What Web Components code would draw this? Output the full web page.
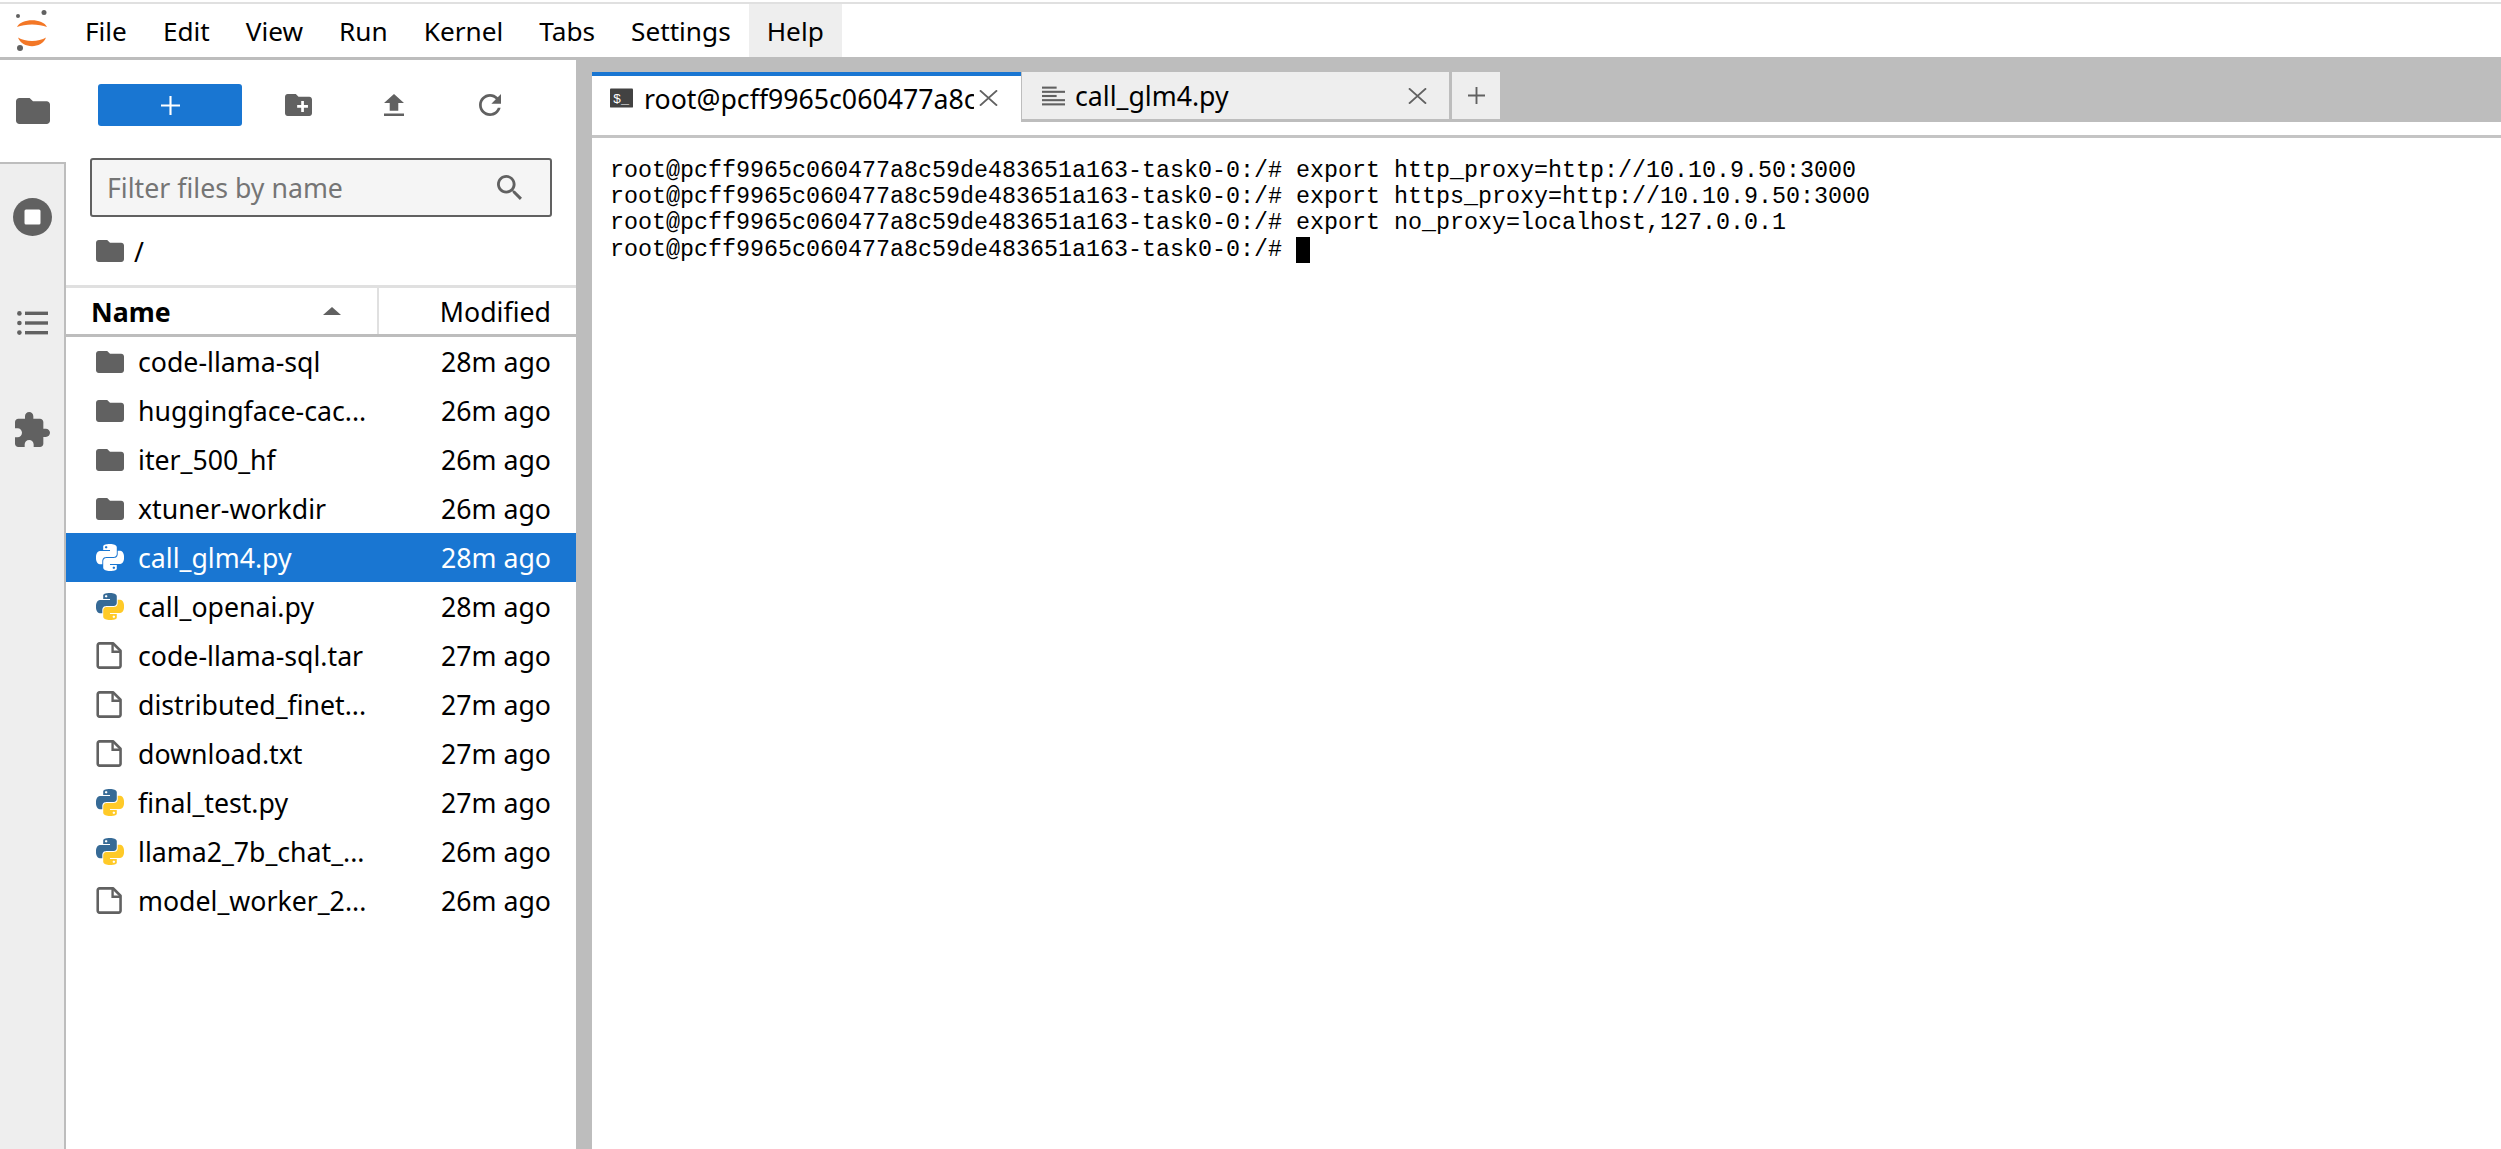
<!DOCTYPE html>
<html lang="en">
<head>
<meta charset="utf-8">
<title>JupyterLab</title>
<style>
  html, body { margin: 0; height: 100%; background: #fff; overflow: hidden; }
</style>
</head>
<body>
<jp-app></jp-app>
<script>
const UI_FONT = '"Noto Sans", "Open Sans", sans-serif';
const UI_SIZE = '26.7px';

const pyPaths = {
  blue: 'M14.25.18l.9.2.73.26.59.3.45.32.34.34.25.34.16.33.1.3.04.26.02.2-.01.13V8.5l-.05.63-.13.55-.21.46-.26.38-.3.31-.33.25-.35.19-.35.14-.33.1-.3.07-.26.04-.21.02H8.77l-.69.05-.59.14-.5.22-.41.27-.33.32-.27.35-.2.36-.15.37-.1.35-.07.32-.04.27-.02.21v3.06H3.17l-.21-.03-.28-.07-.32-.12-.35-.18-.36-.26-.36-.36-.35-.46-.32-.59-.28-.73-.21-.88-.14-1.05-.05-1.23.06-1.22.16-1.04.24-.87.32-.71.36-.57.4-.44.42-.33.42-.24.4-.16.36-.1.32-.05.24-.01h.16l.06.01h8.16v-.83H6.18l-.01-2.75-.02-.37.05-.34.11-.31.17-.28.25-.26.31-.23.38-.2.44-.18.51-.15.58-.12.64-.1.71-.06.77-.04.84-.02 1.27.05zm-6.3 1.98l-.23.33-.08.41.08.41.23.34.33.22.41.09.41-.09.33-.22.23-.34.08-.41-.08-.41-.23-.33-.33-.22-.41-.09-.41.09z',
  yellow: 'M21.04 6.11l.28.06.32.12.35.18.36.27.36.35.35.47.32.59.28.73.21.88.14 1.04.05 1.23-.06 1.23-.16 1.04-.24.86-.32.71-.36.57-.4.45-.42.33-.42.24-.4.16-.36.09-.32.05-.24.02-.16-.01h-8.22v.82h5.84l.01 2.76.02.36-.05.34-.11.31-.17.29-.25.25-.31.24-.38.2-.44.17-.51.15-.58.13-.64.09-.71.07-.77.04-.84.01-1.27-.04-1.07-.14-.9-.2-.73-.25-.59-.3-.45-.33-.34-.34-.25-.34-.16-.33-.1-.3-.04-.25-.02-.2.01-.13v-5.34l.05-.64.13-.54.21-.46.26-.38.3-.32.33-.24.35-.2.35-.14.33-.1.3-.06.26-.04.21-.02.13-.01h5.84l.69-.05.59-.14.5-.21.41-.28.33-.32.27-.35.2-.36.15-.36.1-.35.07-.32.04-.28.02-.21V6.07h2.09l.14.01zm-6.47 14.25l-.23.33-.08.41.08.41.23.33.33.23.41.08.41-.08.33-.23.23-.33.08-.41-.08-.41-.23-.33-.33-.23-.41-.08-.41.08z'
};

// icon markup, size is set by whoever uses it
const icons = {
  folder: '<svg viewBox="2 4 20 16" preserveAspectRatio="none"><path fill="#616161" d="M10 4H4c-1.1 0-1.99.9-1.99 2L2 18c0 1.1.9 2 2 2h16c1.1 0 2-.9 2-2V8c0-1.1-.9-2-2-2h-8l-2-2z"/></svg>',
  newFolder: '<svg viewBox="2 4 20 16" preserveAspectRatio="none"><path fill="#616161" d="M20 6h-8l-2-2H4c-1.11 0-1.99.89-1.99 2L2 18c0 1.11.89 2 2 2h16c1.11 0 2-.89 2-2V8c0-1.11-.89-2-2-2zm-1 8h-3v3h-2v-3h-3v-2h3V9h2v3h3v2z"/></svg>',
  upload: '<svg viewBox="5 3 14 17" preserveAspectRatio="none"><path fill="#616161" d="M9 16h6v-6h4l-7-7-7 7h4zm-4 2h14v2H5z"/></svg>',
  refresh: '<svg viewBox="4 4 16 16" preserveAspectRatio="none"><path fill="#616161" d="M17.65 6.35C16.2 4.9 14.21 4 12 4c-4.42 0-7.99 3.58-7.99 8s3.57 8 7.99 8c3.73 0 6.84-2.55 7.73-6h-2.08c-.82 2.33-3.04 4-5.65 4-3.31 0-6-2.69-6-6s2.69-6 6-6c1.66 0 3.14.69 4.22 1.78L13 11h7V4l-2.35 2.35z"/></svg>',
  search: '<svg viewBox="3 3 17.5 17.5" preserveAspectRatio="none"><path fill="#616161" d="M15.5 14h-.79l-.28-.27C15.41 12.59 16 11.11 16 9.5 16 5.91 13.09 3 9.5 3S3 5.91 3 9.5 5.91 16 9.5 16c1.61 0 3.09-.59 4.23-1.57l.27.28v.79l5 4.99L20.49 19l-4.99-5zm-6 0C7.01 14 5 11.99 5 9.5S7.01 5 9.5 5 14 7.01 14 9.5 11.99 14 9.5 14z"/></svg>',
  file: '<svg viewBox="0 0 26 24" preserveAspectRatio="none"><path fill="none" stroke="#616161" stroke-width="2.4" stroke-linejoin="round" d="M3.2 1.2h12.6l7 6.6v13.4a1.6 1.6 0 0 1-1.6 1.6H3.2a1.6 1.6 0 0 1-1.6-1.6V2.8a1.6 1.6 0 0 1 1.6-1.6z"/><path fill="none" stroke="#616161" stroke-width="2.2" d="M15.4 1.6v7h7"/></svg>',
  python: `<svg viewBox="0 0 24 24" preserveAspectRatio="none"><path fill-rule="evenodd" fill="#366a96" d="${pyPaths.blue}"/><path fill-rule="evenodd" fill="#ffca28" d="${pyPaths.yellow}"/></svg>`,
  pythonWhite: `<svg viewBox="0 0 24 24" preserveAspectRatio="none"><path fill-rule="evenodd" fill="#fff" d="${pyPaths.blue}"/><path fill-rule="evenodd" fill="#fff" d="${pyPaths.yellow}"/></svg>`,
  stop: '<svg viewBox="0 0 39 38"><ellipse cx="19.5" cy="19" rx="19.5" ry="19" fill="#616161"/><rect x="11.5" y="11.5" width="16" height="15" rx="1.5" fill="#fff"/></svg>',
  list: '<svg viewBox="0 0 31 24"><g fill="#616161"><circle cx="2.4" cy="2.4" r="2.3"/><circle cx="2.4" cy="12" r="2.3"/><circle cx="2.4" cy="21.6" r="2.3"/><rect x="8" y="0.6" width="23" height="3.4"/><rect x="8" y="10.3" width="23" height="3.4"/><rect x="8" y="20" width="23" height="3.4"/></g></svg>',
  extension: '<svg viewBox="2 1 21 21" preserveAspectRatio="none"><path fill="#616161" d="M20.5 11H19V7c0-1.1-.9-2-2-2h-4V3.5C13 2.12 11.88 1 10.5 1S8 2.12 8 3.5V5H4c-1.1 0-1.99.9-1.99 2v3.8H3.5c1.49 0 2.7 1.21 2.7 2.7s-1.21 2.7-2.7 2.7H2V20c0 1.1.9 2 2 2h3.8v-1.5c0-1.49 1.21-2.7 2.7-2.7 1.49 0 2.7 1.21 2.7 2.7V22H17c1.1 0 2-.9 2-2v-4h1.5c1.38 0 2.5-1.12 2.5-2.5S21.88 11 20.5 11z"/></svg>',
  terminal: '<svg viewBox="0 0 24 20"><rect width="24" height="20" rx="1" fill="#424242"/><text x="3" y="15" font-family="Liberation Mono, monospace" font-size="14" fill="#fff">$_</text></svg>',
  textFile: '<svg viewBox="0 0 22 18"><g fill="#616161"><rect y="0" width="14" height="2"/><rect y="4" width="22" height="2"/><rect y="8" width="14" height="2"/><rect y="12" width="22" height="2"/><rect y="16" width="22" height="2"/></g></svg>',
  close: '<svg viewBox="0 0 20 16"><path fill="none" stroke="#616161" stroke-width="2" d="M1 0l18 16M19 0L1 16"/></svg>',
  plus: '<svg viewBox="0 0 18 18"><path fill="none" stroke="currentColor" stroke-width="2" d="M9 0v18M0 9h18"/></svg>',
  logo: '<svg width="64" height="54" viewBox="0 0 64 54"><g fill="#f37726"><path d="M17 23C21 14 43 14 47 23 39 19.500 25 19.500 17 23z"/><path d="M18 33.500C25 38 39 38 46 33.500 42 45 22 45 18 33.500z"/></g><g fill="#616161"><circle cx="18" cy="12" r="2"/><circle cx="44" cy="8.500" r="2.500"/><circle cx="20" cy="44" r="3"/></g></svg>'
};

class JpMenubar extends HTMLElement {
  connectedCallback() {
    if (this.shadowRoot) return;
    const items = ['File', 'Edit', 'View', 'Run', 'Kernel', 'Tabs', 'Settings', 'Help'];
    const shadow = this.attachShadow({ mode: 'open' });
    shadow.innerHTML = `
      <style>
        :host {
          display: flex;
          flex: none;
          box-sizing: border-box;
          height: 58px;
          margin-top: 2px;
          border-top: 2px solid #e0e0e0;
          border-bottom: 3px solid #bdbdbd;
          font: 26.2px ${UI_FONT};
          color: #000;
          background: #fff;
        }
        .logo { width: 67px; flex: none; }
        .logo svg { display: block; }
        .item { padding: 0 18px; line-height: 55px; }
        .item.hover { background: #eee; }
      </style>
      <div class="logo">${icons.logo}</div>
      ${items.map(t => `<div class="item${t === 'Help' ? ' hover' : ''}">${t}</div>`).join('')}
    `;
  }
}

class JpSidebar extends HTMLElement {
  connectedCallback() {
    if (this.shadowRoot) return;
    const shadow = this.attachShadow({ mode: 'open' });
    shadow.innerHTML = `
      <style>
        :host {
          display: flex;
          flex-direction: column;
          flex: none;
          width: 66px;
          background: #eee;
          box-sizing: border-box;
        }
        .tab {
          height: 106px;
          display: flex;
          align-items: center;
          justify-content: center;
          border-right: 2px solid #bdbdbd;
          box-sizing: border-box;
        }
        .tab.active {
          height: 104px;
          background: #fff;
          border-right: 0;
          border-bottom: 2px solid #bdbdbd;
        }
        .fill { flex: 1; border-right: 2px solid #bdbdbd; }
        .tab svg { display: block; }
        .folder svg { width: 34px; height: 26px; }
        .stop svg { width: 39px; height: 38px; }
        .list svg { width: 31px; height: 24px; }
        .ext svg { width: 35px; height: 35px; }
      </style>
      <div class="tab active folder">${icons.folder}</div>
      <div class="tab stop">${icons.stop}</div>
      <div class="tab list">${icons.list}</div>
      <div class="tab ext">${icons.extension}</div>
      <div class="fill"></div>
    `;
  }
}

class JpFileRow extends HTMLElement {
  connectedCallback() {
    if (this.shadowRoot) return;
    const kind = this.getAttribute('kind');
    const selected = this.hasAttribute('selected');
    const icon = kind === 'python' && selected ? icons.pythonWhite : icons[kind];
    const shadow = this.attachShadow({ mode: 'open' });
    shadow.innerHTML = `
      <style>
        :host {
          display: flex;
          align-items: center;
          height: 49px;
          padding: 0 25px 0 30px;
          font: ${UI_SIZE} ${UI_FONT};
          color: ${selected ? '#fff' : '#000'};
          background: ${selected ? '#1976d2' : '#fff'};
        }
        .icon { width: 28px; height: ${kind === 'folder' ? 22 : 27}px; flex: none; margin-right: 14px; }
        .icon svg { display: block; width: 100%; height: 100%; }
        .name { flex: 1; white-space: nowrap; }
        .date { white-space: nowrap; }
      </style>
      <span class="icon">${icon}</span>
      <span class="name"><slot></slot></span>
      <span class="date">${this.getAttribute('date')}</span>
    `;
  }
}

class JpFileBrowser extends HTMLElement {
  connectedCallback() {
    if (this.shadowRoot) return;
    const shadow = this.attachShadow({ mode: 'open' });
    shadow.innerHTML = `
      <style>
        :host {
          display: flex;
          flex-direction: column;
          flex: none;
          width: 510px;
          background: #fff;
          font: ${UI_SIZE} ${UI_FONT};
          color: #000;
          overflow: hidden;
        }
        svg { display: block; width: 100%; height: 100%; }
        .toolbar { display: flex; align-items: center; padding: 24px 0 0 32px; height: 42px; }
        .new {
          width: 144px;
          height: 42px;
          margin-right: 8px;
          background: #1976d2;
          color: #fff;
          border-radius: 3px;
          display: flex;
          align-items: center;
          justify-content: center;
        }
        .new svg { width: 19px; height: 19px; }
        .tool { width: 96px; display: flex; justify-content: center; }
        .tool span { display: block; height: 22px; }
        .filter {
          box-sizing: border-box;
          display: flex;
          align-items: center;
          justify-content: space-between;
          width: 462px;
          height: 59px;
          margin: 32px 0 0 24px;
          padding: 0 28px 0 15px;
          background: #f5f5f5;
          border: 2px solid #616161;
          border-radius: 3px;
          color: #757575;
        }
        .filter span { display: block; width: 25px; height: 25px; }
        .crumbs { display: flex; align-items: center; height: 68px; padding: 0 0 0 30px; box-sizing: border-box; }
        .crumbs .ic { width: 28px; height: 22px; margin-right: 10px; }
        .header {
          box-sizing: border-box;
          display: flex;
          align-items: center;
          height: 52px;
          border-top: 3px solid #e0e0e0;
          border-bottom: 3px solid #bdbdbd;
          padding: 0 25px;
        }
        .name {
          box-sizing: border-box;
          flex: none;
          width: 286px;
          padding-right: 36px;
          display: flex;
          align-items: center;
          justify-content: space-between;
          font-weight: 700;
        }
        .sort { flex: none; width: 18px; height: 8px; }
        .divider { align-self: stretch; width: 2px; background: #e0e0e0; }
        .modified { margin-left: auto; }
      </style>
      <div class="toolbar">
        <div class="new">${icons.plus}</div>
        <div class="tool"><span style="width:27px">${icons.newFolder}</span></div>
        <div class="tool"><span style="width:20px">${icons.upload}</span></div>
        <div class="tool"><span style="width:22px">${icons.refresh}</span></div>
      </div>
      <div class="filter">Filter files by name<span>${icons.search}</span></div>
      <div class="crumbs"><div class="ic">${icons.folder}</div>/</div>
      <div class="header">
        <div class="name">Name<svg class="sort" viewBox="0 0 18 8" preserveAspectRatio="none"><path fill="#616161" d="M9 0l9 8H0z"/></svg></div>
        <div class="divider"></div>
        <div class="modified">Modified</div>
      </div>
      <slot></slot>
    `;
  }
}

class JpTab extends HTMLElement {
  connectedCallback() {
    if (this.shadowRoot) return;
    const active = this.hasAttribute('active');
    const shadow = this.attachShadow({ mode: 'open' });
    shadow.innerHTML = `
      <style>
        :host {
          display: flex;
          align-items: center;
          box-sizing: border-box;
          width: 429px;
          height: ${active ? 63 : 50}px;
          padding: ${active ? '0 23px 15px 18px' : '0 22px 0 20px'};
          background: ${active ? '#fff' : '#eee'};
          border-top: ${active ? '4px solid #1976d2' : '0'};
          ${active ? '' : 'border-bottom: 3px solid #bdbdbd; border-left: 1px solid #bdbdbd; border-right: 1px solid #bdbdbd;'}
          font: ${UI_SIZE} ${UI_FONT};
          color: #000;
        }
        .icon { flex: none; width: 23px; height: 20px; margin-right: ${active ? 11 : 10}px; }
        .icon svg, .close svg { display: block; width: 100%; height: 100%; }
        .title { flex: 1; overflow: hidden; white-space: nowrap; }
        .close { flex: none; width: 19px; height: 16px; margin-left: 5px; }
      </style>
      <span class="icon">${icons[this.getAttribute('icon')]}</span>
      <span class="title"><slot></slot></span>
      <span class="close">${icons.close}</span>
    `;
  }
}

class JpTabbar extends HTMLElement {
  connectedCallback() {
    if (this.shadowRoot) return;
    const shadow = this.attachShadow({ mode: 'open' });
    shadow.innerHTML = `
      <style>
        :host {
          display: block;
          flex: none;
          height: 78px;
          box-sizing: border-box;
          background: linear-gradient(#bdbdbd 62px, #fff 62px);
          border-bottom: 3px solid #c4c4c4;
        }
        .strip { display: flex; align-items: flex-start; padding-top: 12px; }
        .add {
          box-sizing: border-box;
          width: 48px;
          height: 50px;
          margin-left: 2px;
          background: #eee;
          border-bottom: 3px solid #bdbdbd;
          color: #616161;
          display: flex;
          align-items: center;
          justify-content: center;
        }
        .add svg { display: block; width: 17px; height: 17px; }
      </style>
      <div class="strip"><slot></slot><div class="add">${icons.plus}</div></div>
    `;
  }
}

class JpTerminal extends HTMLElement {
  connectedCallback() {
    if (this.shadowRoot) return;
    const prompt = 'root@pcff9965c060477a8c59de483651a163-task0-0:/# ';
    const lines = [
      'export http_proxy=http://10.10.9.50:3000',
      'export https_proxy=http://10.10.9.50:3000',
      'export no_proxy=localhost,127.0.0.1'
    ];
    const shadow = this.attachShadow({ mode: 'open' });
    shadow.innerHTML = `
      <style>
        :host {
          display: block;
          flex: 1;
          padding: 20px 0 0 18px;
          background: #fff;
          color: #000;
          font: 23.33px/26.2px "Liberation Mono", monospace;
        }
        .line { white-space: pre; }
        .cursor { display: inline-block; width: 14px; height: 26px; background: #000; vertical-align: top; }
      </style>
      ${lines.map(l => `<div class="line">${prompt}${l}</div>`).join('')}
      <div class="line">${prompt}<span class="cursor"></span></div>
    `;
  }
}

class JpApp extends HTMLElement {
  connectedCallback() {
    if (this.shadowRoot) return;
    const rows = [
      ['folder', 'code-llama-sql', '28m ago'],
      ['folder', 'huggingface-cac...', '26m ago'],
      ['folder', 'iter_500_hf', '26m ago'],
      ['folder', 'xtuner-workdir', '26m ago'],
      ['python', 'call_glm4.py', '28m ago', true],
      ['python', 'call_openai.py', '28m ago'],
      ['file', 'code-llama-sql.tar', '27m ago'],
      ['file', 'distributed_finet...', '27m ago'],
      ['file', 'download.txt', '27m ago'],
      ['python', 'final_test.py', '27m ago'],
      ['python', 'llama2_7b_chat_...', '26m ago'],
      ['file', 'model_worker_2...', '26m ago']
    ];
    const shadow = this.attachShadow({ mode: 'open' });
    shadow.innerHTML = `
      <style>
        :host { display: flex; flex-direction: column; height: 100vh; }
        .body { flex: 1; display: flex; min-height: 0; }
        .splitter { flex: none; width: 16px; background: #bdbdbd; }
        .main { flex: 1; display: flex; flex-direction: column; min-width: 0; }
      </style>
      <jp-menubar></jp-menubar>
      <div class="body">
        <jp-sidebar></jp-sidebar>
        <jp-file-browser>
          ${rows.map(r => `<jp-file-row kind="${r[0]}" date="${r[2]}"${r[3] ? ' selected' : ''}>${r[1]}</jp-file-row>`).join('')}
        </jp-file-browser>
        <div class="splitter"></div>
        <div class="main">
          <jp-tabbar>
            <jp-tab active icon="terminal">root@pcff9965c060477a8c</jp-tab>
            <jp-tab icon="textFile">call_glm4.py</jp-tab>
          </jp-tabbar>
          <jp-terminal></jp-terminal>
        </div>
      </div>
    `;
  }
}

customElements.define('jp-menubar', JpMenubar);
customElements.define('jp-sidebar', JpSidebar);
customElements.define('jp-file-row', JpFileRow);
customElements.define('jp-file-browser', JpFileBrowser);
customElements.define('jp-tab', JpTab);
customElements.define('jp-tabbar', JpTabbar);
customElements.define('jp-terminal', JpTerminal);
customElements.define('jp-app', JpApp);
</script>
</body>
</html>
